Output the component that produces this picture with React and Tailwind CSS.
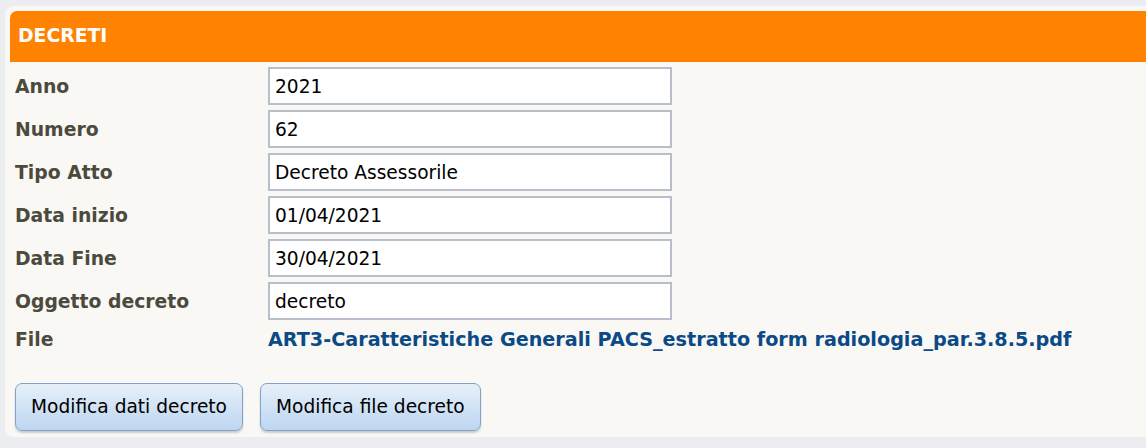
import { useState } from "react";

const FIELDS = [
  { id: "anno", label: "Anno", value: "2021" },
  { id: "numero", label: "Numero", value: "62" },
  { id: "tipo", label: "Tipo Atto", value: "Decreto Assessorile" },
  { id: "inizio", label: "Data inizio", value: "01/04/2021" },
  { id: "fine", label: "Data Fine", value: "30/04/2021" },
  { id: "oggetto", label: "Oggetto decreto", value: "decreto" },
];

function Btn({ children }) {
  return (
    <button className="h-[48px] px-[15px] rounded-[7px] border border-[#7fa3c8] bg-gradient-to-b from-[#e6f0fa] to-[#bdd6f0] text-[18.6px] text-black shadow-[0_2px_2px_rgba(0,0,0,0.18)]">
      {children}
    </button>
  );
}

export default function App() {
  const [values, setValues] = useState(
    Object.fromEntries(FIELDS.map((f) => [f.id, f.value]))
  );

  return (
    <div
      className="w-[1146px] h-[448px] bg-[#ebedf1] pt-[6px] pl-[5px] overflow-hidden"
      style={{ fontFamily: '"DejaVu Sans", Verdana, sans-serif' }}
    >
      <div className="h-[431px] w-[1160px] bg-[#f9f8f4] rounded-[9px] p-[5px]">
        {/* header */}
        <div className="h-[51px] bg-[#ff8200] rounded-tl-[7px] flex items-center pl-[8px]">
          <span className="text-white font-bold text-[18.8px]">DECRETI</span>
        </div>

        <div className="pl-[5px] pt-[5px] flex flex-col gap-[5px]">
          {FIELDS.map(({ id, label }) => (
            <div key={id} className="flex items-center h-[38px]">
              <label className="w-[253px] pt-[3px] font-bold text-[18.8px] text-[#4b4a3d]">
                {label}
              </label>
              <input
                value={values[id]}
                onChange={(e) => setValues({ ...values, [id]: e.target.value })}
                className="w-[404px] h-[38px] border-2 border-[#b9bfca] bg-white px-[5px] text-[18.6px] text-black outline-none"
              />
            </div>
          ))}
          <div className="flex items-center h-[28px] pt-[3px]">
            <span className="w-[253px] font-bold text-[18.8px] text-[#4b4a3d]">File</span>
            <a href="#" className="font-bold text-[19.2px] text-[#0c4a86]">
              ART3-Caratteristiche Generali PACS_estratto form radiologia_par.3.8.5.pdf
            </a>
          </div>
        </div>

        <div className="flex gap-[17px] pl-[5px] pt-[30px]">
          <Btn>Modifica dati decreto</Btn>
          <Btn>Modifica file decreto</Btn>
        </div>
      </div>
    </div>
  );
}
